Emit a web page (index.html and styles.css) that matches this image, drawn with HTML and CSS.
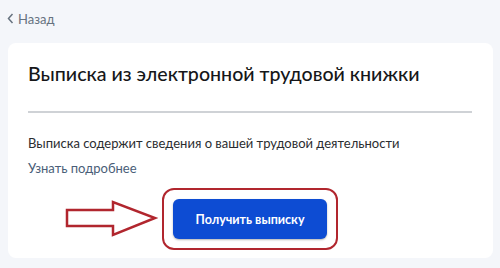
FILE: index.html
```html
<!DOCTYPE html>
<html lang="ru">
<head>
<meta charset="utf-8">
<link rel="stylesheet" href="styles.css">
</head>
<body>
<div class="page">
  <a class="back" href="#">
    <svg class="chev" width="7" height="11" viewBox="0 0 7 11"><path d="M5.5 1 L1.5 5.5 L5.5 10" fill="none" stroke="#66727f" stroke-width="1.5"/></svg>
    <span>Назад</span>
  </a>
  <div class="card">
    <h1 class="title">Выписка из электронной трудовой книжки</h1>
    <div class="divider"></div>
    <p class="text">Выписка содержит сведения о вашей трудовой деятельности</p>
    <a class="more" href="#">Узнать подробнее</a>
    <div class="action">
      <div class="mark">
        <svg class="arrow" width="94" height="38" viewBox="0 0 94 38"><path d="M2 10 H48 V2 L90 18 L48 35 V26 H2 Z" fill="#fff" stroke="#b1262e" stroke-width="2.5" stroke-linejoin="miter"/></svg>
        <button class="btn">Получить выписку</button>
      </div>
    </div>
  </div>
</div>
</body>
</html>
```
FILE: styles.css
```css
html, body {
  margin: 0;
  padding: 0;
  background: #f4f6fa;
  font-family: Lato, "Noto Sans", sans-serif;
}
.page {
  width: 500px;
  height: 268px;
  padding: 10px 0 0 8px;
  box-sizing: border-box;
}
.back {
  display: flex;
  align-items: center;
  gap: 4px;
  color: #66727f;
  font-size: 13px;
  text-decoration: none;
  height: 17px;
  margin-left: -1px;
}
.chev { display: block; }
.card {
  margin-top: 16px;
  width: 485px;
  height: 215px;
  background: #fff;
  border-radius: 8px;
  padding: 18px 21px 0 20px;
  box-sizing: border-box;
}
.title {
  margin: 0;
  font-size: 19.6px;
  font-weight: 500;
  color: #161719;
  line-height: 26px;
}
.divider {
  height: 2px;
  background: #cfd2d6;
  margin-top: 24px;
}
.text {
  margin: 22px 0 0;
  font-size: 13px;
  line-height: 16px;
  color: #2b2d30;
}
.more {
  display: block;
  margin-top: 9px;
  font-size: 13px;
  line-height: 16px;
  color: #4a5e78;
  text-decoration: none;
}
.action {
  display: flex;
  justify-content: center;
  margin-top: 12px;
}
.mark {
  position: relative;
  border: 2px solid #b1262e;
  border-radius: 12px;
  padding: 9px;
  display: flex;
}
.arrow {
  position: absolute;
  left: -99px;
  top: 10px;
}
.btn {
  width: 154px;
  height: 40px;
  border: 0;
  border-radius: 6px;
  background: #0d4cd3;
  color: #fff;
  font-family: Lato, "Noto Sans", sans-serif;
  font-size: 12.5px;
  font-weight: 700;
  box-shadow: 0 1px 2px rgba(0,0,0,0.3);
}
```
